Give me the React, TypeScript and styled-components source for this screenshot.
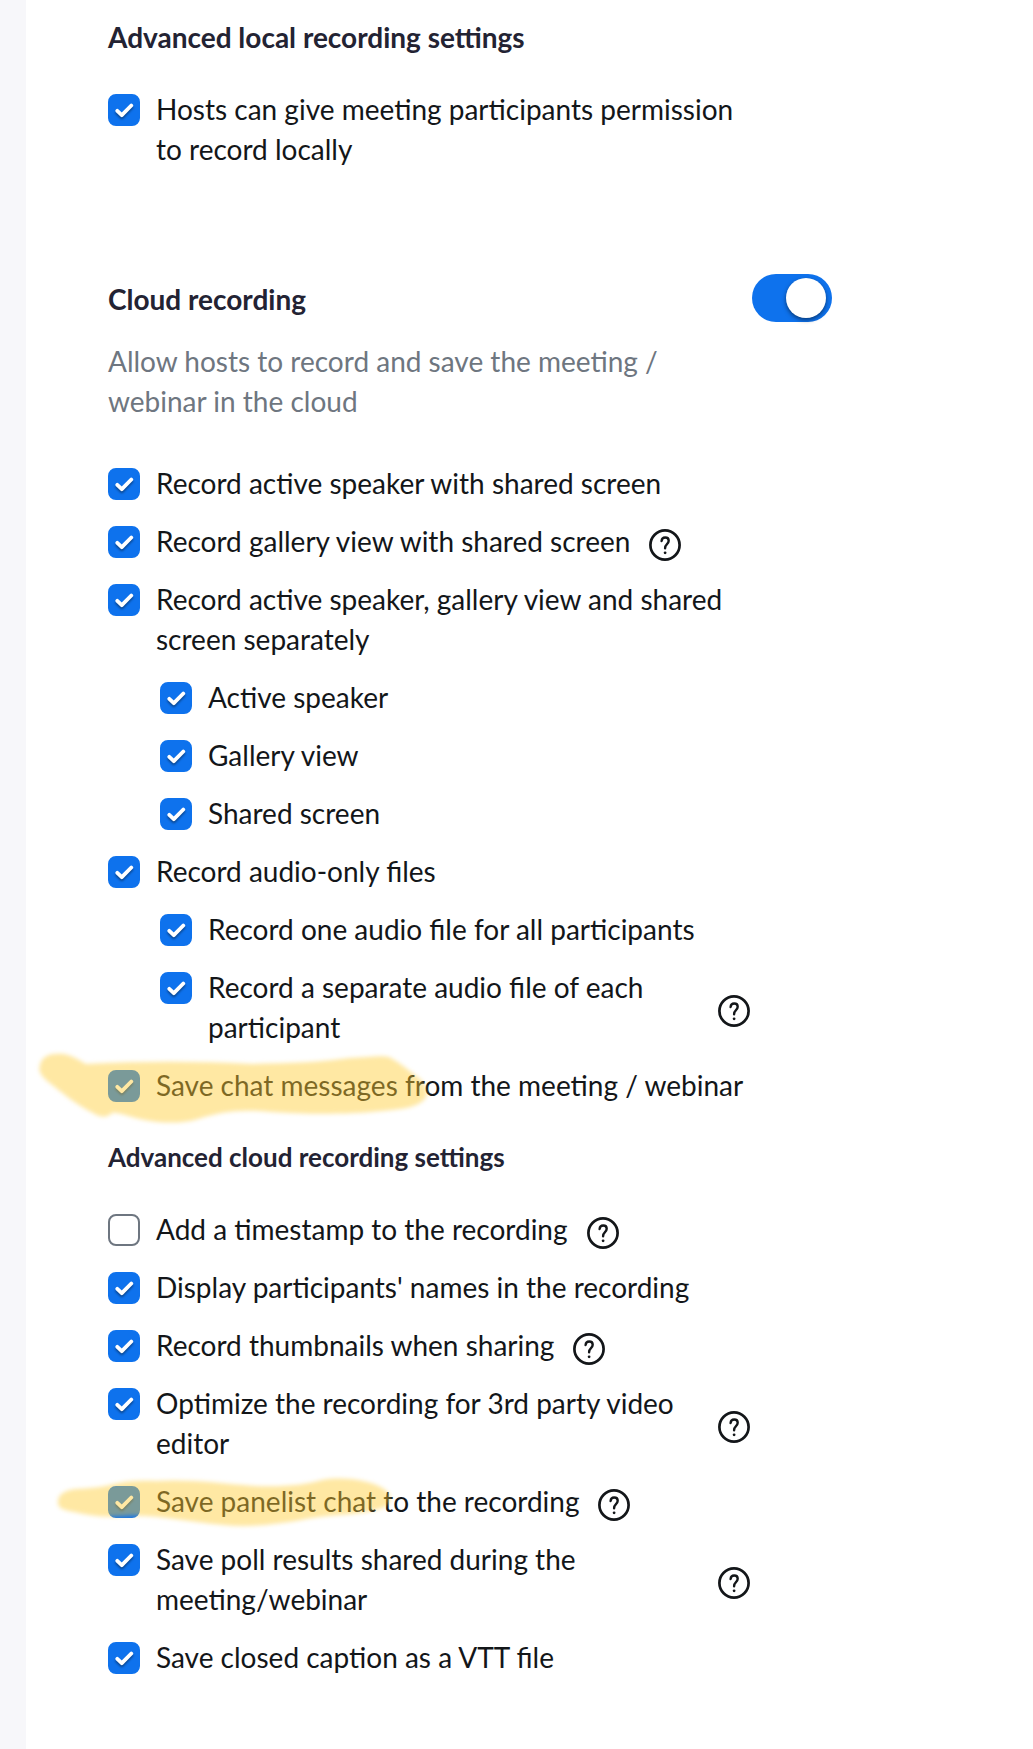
import React, { useId, useState } from "react";
import styled, { createGlobalStyle } from "styled-components";

const GlobalStyle = createGlobalStyle`
  *, *::before, *::after { box-sizing: border-box; }
  html, body, #root { margin: 0; min-height: 100%; }
  html { background: #ffffff; }
  body { font-family: Lato, "Open Sans", sans-serif; color: #131619; }
`;

const Page = styled.div`
  min-height: 100vh;
  border-left: 26px solid #f7f7fa;
  background: #ffffff;
`;

const Content = styled.main`
  max-width: 806px;
  padding: 17px 0 72px 82px;
`;

const Subheading = styled.h3<{ $compact?: boolean }>`
  margin: 0 0 32px;
  font-size: ${(p) => (p.$compact ? 26 : 28)}px;
  line-height: 40px;
  font-weight: 700;
  color: #232333;
`;

const Section = styled.section<{ $gap?: number }>`
  max-width: 642px;
  margin-top: ${(p) => p.$gap ?? 0}px;
`;

const SectionHeader = styled.header`
  display: flex;
  align-items: center;
  justify-content: space-between;
  margin: 105px 0 19px;
`;

const Title = styled.h2`
  margin: 0;
  padding-top: 2px;
  font-size: 28px;
  line-height: 40px;
  font-weight: 700;
  color: #232333;
`;

const Description = styled.p`
  max-width: 642px;
  margin: 0;
  font-size: 28px;
  line-height: 40px;
  color: #6e7680;
`;

const Switch = styled.input`
  appearance: none;
  flex: none;
  width: 80px;
  height: 48px;
  margin: 0;
  padding: 4px 6px;
  display: flex;
  border-radius: 24px;
  background: #909096;
  cursor: pointer;

  &::before {
    content: "";
    width: 40px;
    height: 40px;
    border-radius: 50%;
    background: #ffffff;
    box-shadow: 0 2px 4px rgba(0, 0, 0, 0.5);
  }

  &:checked {
    justify-content: flex-end;
    background: #0e72ed;
  }
`;

const List = styled.ul`
  display: flex;
  flex-direction: column;
  gap: 18px;
  margin: 0;
  padding: 0;
  list-style: none;
`;

const Row = styled.li<{ $nested?: boolean }>`
  position: relative;
  display: flex;
  align-items: center;
  gap: 19px;
  padding-left: ${(p) => (p.$nested ? 52 : 0)}px;
`;

const OptionLabel = styled.label`
  display: flex;
  align-items: flex-start;
  gap: 16px;
  min-width: 0;
  font-size: 28px;
  line-height: 40px;
  cursor: pointer;
`;

const BoxWrap = styled.span`
  display: grid;
  flex: none;
  padding-top: 5px;

  > * { grid-area: 1 / 1; }
`;

const Box = styled.input`
  appearance: none;
  width: 32px;
  height: 32px;
  margin: 0;
  border: 2px solid #6e7680;
  border-radius: 8px;
  background: #ffffff;
  cursor: pointer;

  &:checked {
    border-color: #0e72ed;
    background: #0e72ed;
  }
`;

const Check = styled.svg`
  width: 32px;
  height: 32px;
  pointer-events: none;
  filter: drop-shadow(0 2px 1px rgba(0, 0, 0, 0.4));
`;

const HelpButton = styled.button`
  flex: none;
  display: flex;
  width: 32px;
  height: 32px;
  margin: 8px 0 0;
  padding: 0;
  border: 0;
  background: none;
  color: #131619;
  cursor: pointer;
`;

const Marker = styled.svg`
  position: absolute;
  top: -16px;
  left: -76px;
  width: 420px;
  height: 80px;
  overflow: visible;
  pointer-events: none;
  filter: blur(2px);
`;

function HelpIcon() {
  return (
    <svg width="32" height="32" viewBox="0 0 32 32" fill="none" stroke="currentColor" aria-hidden="true">
      <circle cx="16" cy="16" r="14.6" strokeWidth="2.7" />
      <path d="M12.6 12c.2-2.3 1.5-3.5 3.6-3.5s3.5 1.3 3.5 3.2c0 1.7-.9 2.7-1.9 3.6-1.2 1.1-1.7 1.9-1.7 4" strokeWidth="2.4" strokeLinecap="round" />
      <circle cx="16.1" cy="23.8" r="1.4" fill="currentColor" stroke="none" />
    </svg>
  );
}

type OptionData = {
  text: string;
  checked?: boolean;
  nested?: boolean;
  help?: boolean;
  marker?: string;
};

function Option({ text, checked = true, nested, help, marker }: OptionData) {
  const id = useId();
  const [on, setOn] = useState(checked);
  return (
    <Row $nested={nested}>
      <OptionLabel htmlFor={id}>
        <BoxWrap>
          <Box id={id} type="checkbox" checked={on} onChange={(e) => setOn(e.target.checked)} />
          {on && (
            <Check viewBox="0 0 32 32" fill="none" aria-hidden="true">
              <path d="M9.3 16.8l4.5 4.4 9.5-9.7" stroke="#fff" strokeWidth="3.8" strokeLinecap="round" strokeLinejoin="round" />
            </Check>
          )}
        </BoxWrap>
        <span>{text}</span>
      </OptionLabel>
      {help && (
        <HelpButton type="button" aria-label={`Help: ${text}`}>
          <HelpIcon />
        </HelpButton>
      )}
      {marker && (
        <Marker viewBox="0 0 420 80" aria-hidden="true">
          <path d={marker} fill="#ffcc32" fillOpacity="0.45" />
        </Marker>
      )}
    </Row>
  );
}

const chatMarker =
  "M8 16C10 6 20 4 32 5C42 7 48 12 54 15C110 12 165 12 220 15C260 14 290 13 318 9C336 8 350 6 357 8C369 14 378 23 387 29C394 36 397 45 393 50C384 59 370 60 350 62C320 65 280 66 240 63C210 60 190 62 166 70C146 76 120 74 100 68C92 66 84 63 80 64C75 69 69 69 61 64C42 55 26 40 14 31C9 26 6 22 8 16Z";

const panelistMarker =
  "M26 38C25 29 34 25 44 24C58 23 66 23 78 20C92 16 106 15 124 16C156 14 186 18 222 21C254 22 272 20 290 15C314 11 340 16 352 24C361 31 361 38 350 43C330 50 304 49 280 53C254 58 222 63 192 60C158 57 122 49 94 51C74 53 60 51 42 47C31 45 26 43 26 38Z";

const cloudOptions: OptionData[] = [
  { text: "Record active speaker with shared screen" },
  { text: "Record gallery view with shared screen", help: true },
  { text: "Record active speaker, gallery view and shared screen separately" },
  { text: "Active speaker", nested: true },
  { text: "Gallery view", nested: true },
  { text: "Shared screen", nested: true },
  { text: "Record audio-only files" },
  { text: "Record one audio file for all participants", nested: true },
  { text: "Record a separate audio file of each participant", nested: true, help: true },
  { text: "Save chat messages from the meeting / webinar", marker: chatMarker },
];

const advancedOptions: OptionData[] = [
  { text: "Add a timestamp to the recording", checked: false, help: true },
  { text: "Display participants' names in the recording" },
  { text: "Record thumbnails when sharing", help: true },
  { text: "Optimize the recording for 3rd party video editor", help: true },
  { text: "Save panelist chat to the recording", help: true, marker: panelistMarker },
  { text: "Save poll results shared during the meeting/webinar", help: true },
  { text: "Save closed caption as a VTT file" },
];

function OptionList({ options }: { options: OptionData[] }) {
  return (
    <List>
      {options.map((o) => (
        <Option key={o.text} {...o} />
      ))}
    </List>
  );
}

export default function App() {
  const [cloud, setCloud] = useState(true);
  return (
    <Page>
      <GlobalStyle />
      <Content>
        <Section>
          <Subheading>Advanced local recording settings</Subheading>
          <OptionList options={[{ text: "Hosts can give meeting participants permission to record locally" }]} />
        </Section>
        <SectionHeader>
          <Title>
            <label htmlFor="cloud-recording">Cloud recording</label>
          </Title>
          <Switch
            id="cloud-recording"
            type="checkbox"
            role="switch"
            checked={cloud}
            onChange={(e) => setCloud(e.target.checked)}
          />
        </SectionHeader>
        <Description>Allow hosts to record and save the meeting / webinar in the cloud</Description>
        <Section $gap={42}>
          <OptionList options={cloudOptions} />
        </Section>
        <Section $gap={32}>
          <Subheading $compact>Advanced cloud recording settings</Subheading>
          <OptionList options={advancedOptions} />
        </Section>
      </Content>
    </Page>
  );
}
